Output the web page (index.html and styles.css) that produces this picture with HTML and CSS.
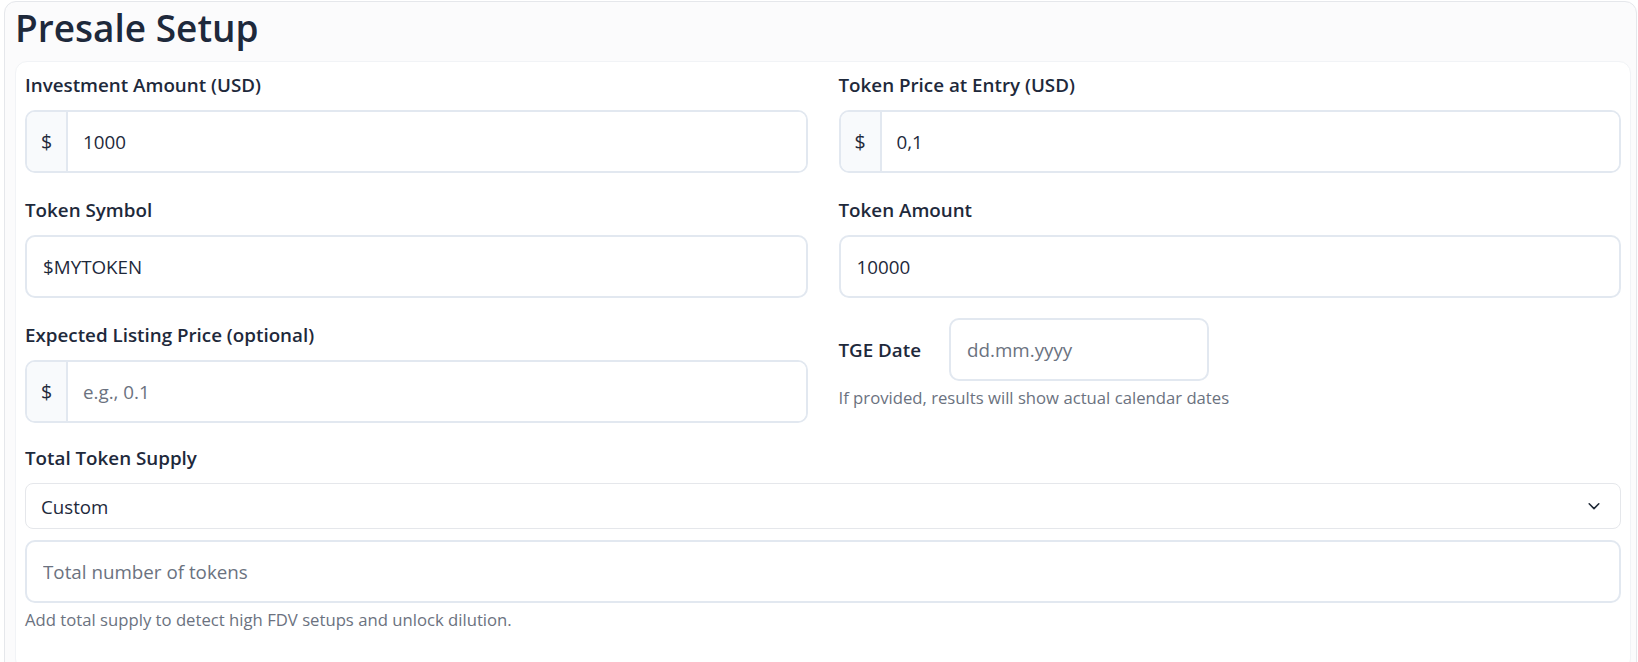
FILE: index.html
```html
<!DOCTYPE html>
<html lang="en">
<head>
<meta charset="utf-8">
<title>Presale Setup</title>
<link rel="stylesheet" href="styles.css">
</head>
<body>
<div class="page">
  <section class="outer-card">
    <h1 class="title">Presale Setup</h1>
    <div class="inner-card">
      <div class="grid">
        <div class="field">
          <label class="label">Investment Amount (USD)</label>
          <div class="input-group">
            <span class="prefix">$</span>
            <input class="input grouped" type="text" value="1000">
          </div>
        </div>
        <div class="field">
          <label class="label">Token Price at Entry (USD)</label>
          <div class="input-group">
            <span class="prefix">$</span>
            <input class="input grouped" type="text" value="0,1">
          </div>
        </div>
        <div class="field">
          <label class="label">Token Symbol</label>
          <input class="input" type="text" value="$MYTOKEN">
        </div>
        <div class="field">
          <label class="label">Token Amount</label>
          <input class="input" type="text" value="10000">
        </div>
        <div class="field">
          <label class="label">Expected Listing Price (optional)</label>
          <div class="input-group">
            <span class="prefix">$</span>
            <input class="input grouped" type="text" placeholder="e.g., 0.1">
          </div>
        </div>
        <div class="field tge">
          <div class="tge-row">
            <label class="label inline">TGE Date</label>
            <input class="input date" type="text" placeholder="dd.mm.yyyy">
          </div>
          <p class="help help-tge">If provided, results will show actual calendar dates</p>
        </div>
      </div>
      <div class="field supply">
        <label class="label">Total Token Supply</label>
        <div class="select">
          <span>Custom</span>
          <svg class="chevron" width="14" height="14" viewBox="0 0 16 16" fill="none" stroke="#1f2937" stroke-width="1.8" stroke-linecap="round" stroke-linejoin="round"><path d="M2.5 5.5 L8 11 L13.5 5.5"/></svg>
        </div>
        <input class="input supply-input" type="text" placeholder="Total number of tokens">
        <p class="help help-supply">Add total supply to detect high FDV setups and unlock dilution.</p>
      </div>
    </div>
  </section>
</div>
</body>
</html>
```
FILE: styles.css
```css
* { box-sizing: border-box; }
html, body { margin: 0; padding: 0; background: #ffffff; }
body {
  font-family: "Open Sans", "Noto Sans", "Liberation Sans", sans-serif;
  color: #1e293b;
  overflow: hidden;
}
.page {
  padding: 1px 1px 0 4px;
}
.outer-card {
  border: 1px solid #e5e7eb;
  border-radius: 12px;
  background: #fbfbfc;
  padding: 0 5px 0 10px;
  min-height: 700px;
}
.title {
  margin: 0;
  padding: 0;
  font-size: 37px;
  line-height: 52px;
  font-weight: 600;
  color: #1e293b;
  height: 59px;
}
.inner-card {
  background: #ffffff;
  border: 1px solid #f1f3f6;
  border-radius: 12px;
  padding: 10px 9px 40px 9px;
}
.grid {
  display: grid;
  grid-template-columns: 1fr 1fr;
  column-gap: 31px;
  row-gap: 24px;
}
.field { display: flex; flex-direction: column; }
.label {
  font-size: 18.8px;
  line-height: 26px;
  font-weight: 600;
  color: #1e293b;
  margin-bottom: 12px;
}
.input {
  height: 63px;
  border: 2px solid #e2e8f0;
  border-radius: 10px;
  padding: 0 16px;
  font-family: inherit;
  font-size: 18.8px;
  color: #1e293b;
  background: #ffffff;
  outline: none;
  width: 100%;
}
.input::placeholder { color: #6b7280; opacity: 1; }
.input-group {
  display: flex;
  height: 63px;
  border: 2px solid #e2e8f0;
  border-radius: 10px;
  overflow: hidden;
}
.prefix {
  width: 41px;
  flex: none;
  display: flex;
  align-items: center;
  justify-content: center;
  background: #f8fafc;
  border-right: 2px solid #e2e8f0;
  font-size: 19.5px;
  color: #1e293b;
}
.input.grouped {
  border: none;
  border-radius: 0;
  height: 100%;
  padding-left: 15px;
}
.tge { margin-top: -4px; }
.tge-row {
  display: flex;
  align-items: center;
}
.label.inline {
  margin: 0 28px 0 0;
}
.input.date {
  width: 260px;
  flex: none;
}
.help {
  margin: 0;
  font-size: 16.7px;
  line-height: 20px;
  color: #6b7280;
}
.help-tge { margin-top: 7px; }
.supply { margin-top: 22px; }
.select {
  height: 46px;
  border: 1px solid #e5e7eb;
  border-radius: 8px;
  display: flex;
  align-items: center;
  justify-content: space-between;
  padding: 0 19px 0 15px;
  font-size: 18.7px;
  color: #1e293b;
  background: #ffffff;
}
.chevron { flex: none; }
.supply-input { margin-top: 11px; }
.help-supply { margin-top: 7px; }
```
